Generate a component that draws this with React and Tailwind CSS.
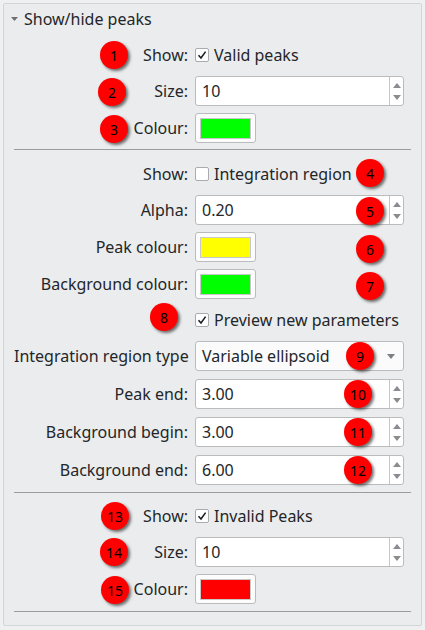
import React from 'react';

const BADGES = [
  { n: 1, x: 114, y: 55 },
  { n: 2, x: 112, y: 92 },
  { n: 3, x: 114, y: 129 },
  { n: 4, x: 370, y: 173 },
  { n: 5, x: 370, y: 211 },
  { n: 6, x: 370, y: 249 },
  { n: 7, x: 370, y: 286 },
  { n: 8, x: 164, y: 317 },
  { n: 9, x: 360, y: 356 },
  { n: 10, x: 358, y: 394 },
  { n: 11, x: 358, y: 432 },
  { n: 12, x: 358, y: 470 },
  { n: 13, x: 115, y: 516 },
  { n: 14, x: 114, y: 552 },
  { n: 15, x: 115, y: 590 },
];

const Row = ({ label, children, className = '' }) => (
  <div className={`flex items-center ${className}`}>
    <div className="w-[174px] text-right whitespace-nowrap">{label}</div>
    <div className="ml-[7px] w-[209px] h-full flex items-center">{children}</div>
  </div>
);

const Check = ({ checked, text }) => (
  <div className="flex items-center">
    <span className="w-[14px] h-[14px] border border-[#a9abad] rounded-[2px] bg-white flex items-center justify-center">
      {checked && (
        <svg width="10" height="10" viewBox="0 0 10 10">
          <path d="M1.5 5.2 L4 8 L8.6 1.6" fill="none" stroke="#1b1e20" strokeWidth="1.6" />
        </svg>
      )}
    </span>
    <span className="ml-[5px]">{text}</span>
  </div>
);

const SpinBox = ({ value }) => (
  <div className="w-full h-full flex bg-white border border-[#b9bbbd] rounded-[3px]">
    <div className="flex-1 pl-[6px] flex items-center">{value}</div>
    <div className="w-[14px] border-l border-[#c4c6c8] flex flex-col items-center justify-center gap-[7px]">
      <svg width="8" height="5" viewBox="0 0 8 5"><path d="M0 5 L4 0 L8 5 Z" fill="#8a8d90" /></svg>
      <svg width="8" height="5" viewBox="0 0 8 5"><path d="M0 0 L8 0 L4 5 Z" fill="#8a8d90" /></svg>
    </div>
  </div>
);

const ColourButton = ({ colour }) => (
  <div className="w-[61px] h-full bg-[#fcfcfc] border border-[#b9bbbd] rounded-[3px] flex items-center justify-center">
    <div className={`w-[51px] h-[21px] border border-[#c8c8c8] ${colour}`} />
  </div>
);

const Separator = ({ className = '' }) => (
  <div className={`h-px w-[397px] bg-[#9a9c9e] ${className}`} />
);

export default function App() {
  return (
    <div className="relative w-[425px] h-[630px] bg-[#eff0f1] pt-[3px] px-[3px] font-['Noto_Sans',sans-serif] text-[16px] text-[#232629]">
      <div className="h-[623px] border border-[#d3d4d5] rounded-[2px] bg-[#ebeced] pl-[10px]">
        <div className="h-[30px] flex items-center -ml-[3px]">
          <svg width="7" height="4" viewBox="0 0 7 4"><path d="M0 0 L7 0 L3.5 4 Z" fill="#6e7174" /></svg>
          <span className="ml-[6px]">Show/hide peaks</span>
        </div>

        <Row label="Show:" className="mt-[10px] h-[22px]"><Check checked text="Valid peaks" /></Row>
        <Row label="Size:" className="mt-[10px] h-[30px]"><SpinBox value="10" /></Row>
        <Row label="Colour:" className="mt-[7px] h-[30px]"><ColourButton colour="bg-[#00ff00]" /></Row>
        <Separator className="mt-[6px]" />

        <Row label="Show:" className="mt-[13px] h-[22px]"><Check text="Integration region" /></Row>
        <Row label="Alpha:" className="mt-[10px] h-[30px]"><SpinBox value="0.20" /></Row>
        <Row label="Peak colour:" className="mt-[7px] h-[30px]"><ColourButton colour="bg-[#ffff00]" /></Row>
        <Row label="Background colour:" className="mt-[7px] h-[30px]"><ColourButton colour="bg-[#00ff00]" /></Row>
        <Row label="" className="mt-[10px] h-[22px]"><Check checked text="Preview new parameters" /></Row>
        <Row label="Integration region type" className="mt-[10px] h-[30px]">
          <div className="w-full h-full flex items-center bg-[#fbfbfb] border border-[#b9bbbd] rounded-[3px] pl-[6px] pr-[8px]">
            <span className="flex-1">Variable ellipsoid</span>
            <svg width="8" height="5" viewBox="0 0 8 5"><path d="M0 0 L8 0 L4 5 Z" fill="#7d8083" /></svg>
          </div>
        </Row>
        <Row label="Peak end:" className="mt-[8px] h-[30px]"><SpinBox value="3.00" /></Row>
        <Row label="Background begin:" className="mt-[8px] h-[30px]"><SpinBox value="3.00" /></Row>
        <Row label="Background end:" className="mt-[8px] h-[30px]"><SpinBox value="6.00" /></Row>
        <Separator className="mt-[7px]" />

        <Row label="Show:" className="mt-[12px] h-[22px]"><Check checked text="Invalid Peaks" /></Row>
        <Row label="Size:" className="mt-[10px] h-[30px]"><SpinBox value="10" /></Row>
        <Row label="Colour:" className="mt-[7px] h-[30px]"><ColourButton colour="bg-[#ff0000]" /></Row>
        <Separator className="mt-[7px]" />
      </div>

      {BADGES.map(b => (
        <div
          key={b.n}
          className="absolute w-[28px] h-[28px] -ml-[14px] -mt-[14px] rounded-full bg-[#ff0000] shadow-[2px_2px_3px_rgba(0,0,0,0.55)] flex items-center justify-center text-[14px] text-black"
          style={{ left: b.x, top: b.y }}
        >
          {b.n}
        </div>
      ))}
    </div>
  );
}
